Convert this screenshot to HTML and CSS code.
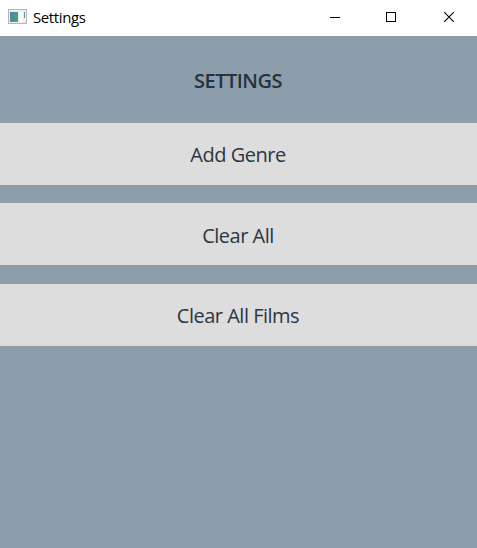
FILE: index.html
```html
<!DOCTYPE html>
<html lang="en">
<head>
<meta charset="utf-8">
<title>Settings</title>
<link rel="stylesheet" href="styles.css">
</head>
<body>
<header class="titlebar">
  <svg class="app-icon" width="19" height="15" viewBox="0 0 19 15">
    <defs><linearGradient id="pane" x1="0" y1="0" x2="1" y2="1"><stop offset="0" stop-color="#5484a4"/><stop offset="1" stop-color="#4ca286"/></linearGradient></defs>
    <rect x=".5" y=".5" width="18" height="14" fill="#eeeeef" stroke="#b4b6ba"/>
    <rect x="2" y="3" width="8" height="10" fill="url(#pane)"/>
    <rect x="11" y="3" width="4" height="10" fill="#fafafa"/>
    <rect x="16" y="3" width="1" height="6" fill="#5a93a0"/>
  </svg>
  <span class="caption">Settings</span>
  <div class="controls">
    <svg width="11" height="11" viewBox="0 0 11 11" shape-rendering="crispEdges"><path d="M0 5.5h10" stroke="#000"/></svg>
    <svg width="11" height="11" viewBox="0 0 11 11" shape-rendering="crispEdges"><rect x=".5" y=".5" width="9" height="9" fill="none" stroke="#000"/></svg>
    <svg class="close" width="11" height="11" viewBox="0 0 11 11"><path d="M.2.2l9.6 9.6M9.8.2L.2 9.8" stroke="#000" stroke-width="1.1"/></svg>
  </div>
</header>
<main class="content">
  <h1 class="heading"><span>SETTINGS</span></h1>
  <button class="action add"><span>Add Genre</span></button>
  <button class="action clear"><span>Clear All</span></button>
  <button class="action films"><span>Clear All Films</span></button>
</main>
</body>
</html>
```
FILE: styles.css
```css
* { box-sizing: border-box; }
body {
  margin: 0;
  height: 548px;
  overflow: hidden;
  display: flex;
  flex-direction: column;
  background: #8c9dab;
  color: #26333e;
  font-family: "Open Sans", "Noto Sans", sans-serif;
}
.titlebar {
  height: 36px;
  flex: none;
  display: flex;
  align-items: center;
  padding: 0 22px 0 8px;
  background: #fff;
  color: #000;
}
.app-icon { margin-top: -3px; }
.caption {
  margin: -2px 0 0 6px;
  font-size: 15px;
  letter-spacing: -0.4px;
}
.controls {
  display: flex;
  gap: 45px;
  margin: -2px 0 0 auto;
}
.close { margin-left: 2px; }
.content {
  flex: 1;
  display: flex;
  flex-direction: column;
}
.heading {
  height: 87px;
  margin: 0;
  padding: 2px 1px 0 0;
  display: flex;
  align-items: center;
  justify-content: center;
  font-size: 20px;
  font-weight: 600;
  line-height: 26px;
  letter-spacing: -0.5px;
}
.action {
  height: 62px;
  margin: 0 0 18px;
  padding: 2px 1px 0 0;
  border: 0;
  background: #ddd;
  color: #2c3742;
  font: 20px/26px "Open Sans", "Noto Sans", sans-serif;
  letter-spacing: -0.5px;
}
.clear {
  margin-bottom: 19px;
  padding-top: 4px;
}
```
